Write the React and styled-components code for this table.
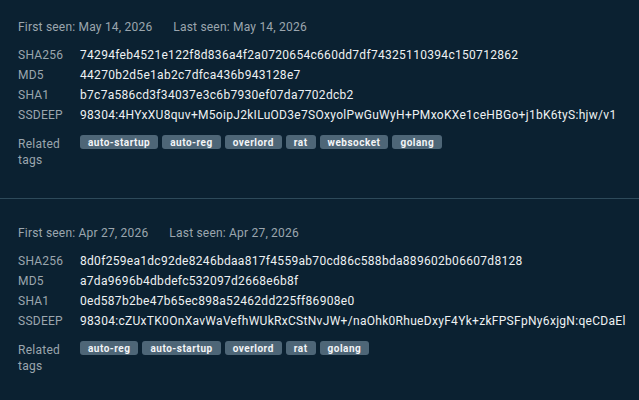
import React from 'react';
import styled, { createGlobalStyle } from 'styled-components';

const GlobalStyle = createGlobalStyle`
    html, body {
        margin: 0;
        padding: 0;
        background: #0b2131;
        overflow: hidden;
    }
    body {
        font-family: Roboto, 'Liberation Sans', sans-serif;
        -webkit-font-smoothing: antialiased;
    }
`;

const Page = styled.div`
    width: 639px;
    height: 400px;
    background: #0b2131;
    overflow: hidden;
`;

const Section = styled.section`
    padding: ${({ $top }) => $top}px 18px 30px;
    border-bottom: 1px solid #2e4a5a;
`;

const Seen = styled.div`
    display: flex;
    gap: 21px;
    font-size: 12px;
    line-height: 16px;
    color: #9ba6ae;
    letter-spacing: 0.2px;
    margin-bottom: 12px;
`;

const Grid = styled.div`
    display: grid;
    grid-template-columns: 62px 1fr;
    row-gap: 4px;
`;

const Label = styled.div`
    font-size: 12px;
    line-height: 16px;
    color: #9ba6ae;
    letter-spacing: 0.25px;
`;

const Value = styled.div`
    font-size: 12px;
    line-height: 16px;
    color: #eef1f3;
    letter-spacing: 0.3px;
    white-space: nowrap;
`;

const TagsLabel = styled(Label)`
    margin-top: 9px;
`;

const Tags = styled.div`
    display: flex;
    gap: 4px;
    margin-top: 8px;
    align-items: flex-start;
`;

const Tag = styled.span`
    display: inline-flex;
    align-items: center;
    height: 14px;
    padding: 0 8px;
    border-radius: 3px;
    background: #4e6677;
    color: #f2f4f6;
    font-size: 10px;
    font-weight: 700;
    letter-spacing: 0.5px;
`;

const samples = [
    {
        top: 19,
        first: 'May 14, 2026',
        last: 'May 14, 2026',
        sha256: '74294feb4521e122f8d836a4f2a0720654c660dd7df74325110394c150712862',
        md5: '44270b2d5e1ab2c7dfca436b943128e7',
        sha1: 'b7c7a586cd3f34037e3c6b7930ef07da7702dcb2',
        ssdeep: '98304:4HYxXU8quv+M5oipJ2kILuOD3e7SOxyolPwGuWyH+PMxoKXe1ceHBGo+j1bK6tyS:hjw/v1',
        tags: ['auto-startup', 'auto-reg', 'overlord', 'rat', 'websocket', 'golang'],
    },
    {
        top: 26,
        first: 'Apr 27, 2026',
        last: 'Apr 27, 2026',
        sha256: '8d0f259ea1dc92de8246bdaa817f4559ab70cd86c588bda889602b06607d8128',
        md5: 'a7da9696b4dbdefc532097d2668e6b8f',
        sha1: '0ed587b2be47b65ec898a52462dd225ff86908e0',
        ssdeep: '98304:cZUxTK0OnXavWaVefhWUkRxCStNvJW+/naOhk0RhueDxyF4Yk+zkFPSFpNy6xjgN:qeCDaEl',
        tags: ['auto-reg', 'auto-startup', 'overlord', 'rat', 'golang'],
    },
];

const Sample = ({ s }) => (
    <Section $top={s.top}>
        <Seen>
            <span>First seen: {s.first}</span>
            <span>Last seen: {s.last}</span>
        </Seen>
        <Grid>
            <Label>SHA256</Label>
            <Value>{s.sha256}</Value>
            <Label>MD5</Label>
            <Value>{s.md5}</Value>
            <Label>SHA1</Label>
            <Value>{s.sha1}</Value>
            <Label>SSDEEP</Label>
            <Value>{s.ssdeep}</Value>
            <TagsLabel>Related<br />tags</TagsLabel>
            <Tags>
                {s.tags.map(t => <Tag key={t}>{t}</Tag>)}
            </Tags>
        </Grid>
    </Section>
);

export default function App() {
    return (
        <Page>
            <GlobalStyle />
            {samples.map(s => <Sample key={s.sha256} s={s} />)}
        </Page>
    );
}
